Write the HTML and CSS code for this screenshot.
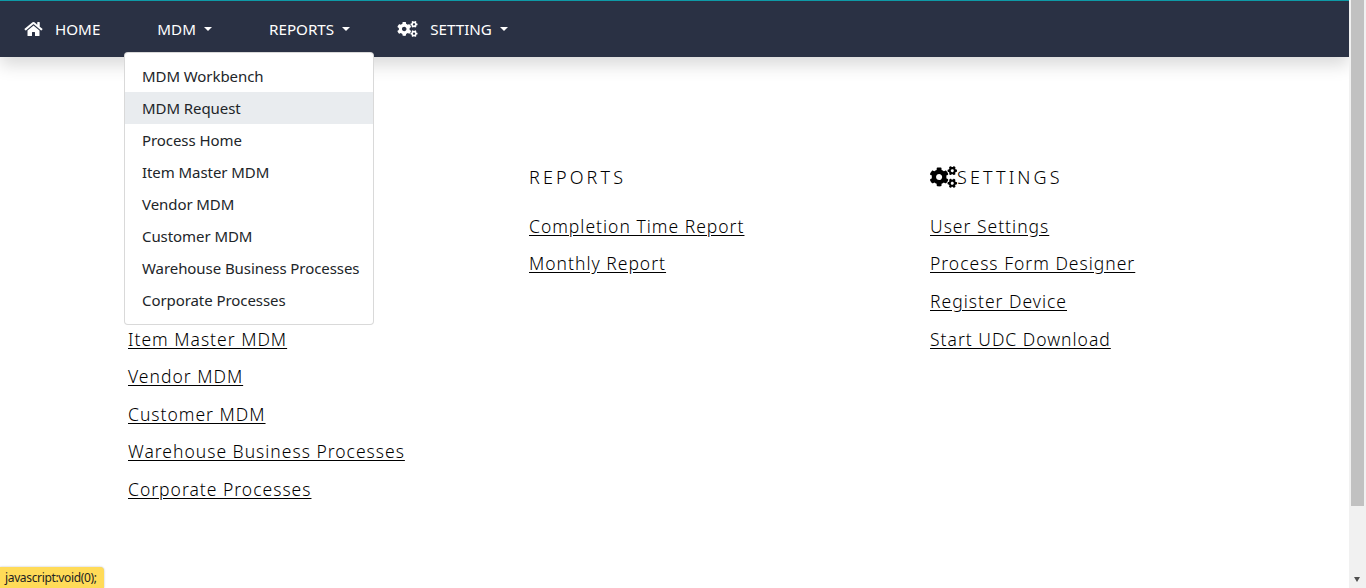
FILE: index.html
```html
<!DOCTYPE html>
<html lang="en">
<head>
<meta charset="utf-8">
<title>MDM</title>
<link rel="stylesheet" href="styles.css">
</head>
<body>
<svg class="defs" width="0" height="0" aria-hidden="true">
<symbol id="cogs" viewBox="0 0 640 512"><path d="M512.1 191l-8.2 14.3c-3 5.3-9.4 7.5-15.1 5.4-11.8-4.4-22.6-10.7-32.1-18.6-4.6-3.8-5.8-10.5-2.8-15.7l8.2-14.3c-6.9-8-12.3-17.3-15.9-27.4h-16.5c-6 0-11.2-4.3-12.2-10.3-2-12-2.1-24.6 0-37.1 1-6 6.2-10.4 12.2-10.4h16.5c3.6-10.1 9-19.4 15.9-27.4l-8.2-14.3c-3-5.2-1.9-11.9 2.8-15.7 9.5-7.9 20.4-14.2 32.1-18.6 5.7-2.1 12.1.1 15.1 5.4l8.2 14.3c10.5-1.9 21.2-1.9 31.7 0L552 6.3c3-5.3 9.4-7.5 15.1-5.4 11.8 4.4 22.6 10.7 32.1 18.6 4.6 3.8 5.8 10.5 2.8 15.7l-8.2 14.3c6.9 8 12.3 17.3 15.9 27.4h16.5c6 0 11.2 4.3 12.2 10.3 2 12 2.1 24.6 0 37.1-1 6-6.2 10.4-12.2 10.4h-16.5c-3.6 10.1-9 19.4-15.9 27.4l8.2 14.3c3 5.2 1.9 11.9-2.8 15.7-9.5 7.9-20.4 14.2-32.1 18.6-5.7 2.1-12.1-.1-15.1-5.4l-8.2-14.3c-10.4 1.9-21.2 1.9-31.7 0zm-10.5-58.8c38.5 29.6 82.4-14.3 52.8-52.8-38.5-29.7-82.4 14.3-52.8 52.8zM386.3 286.1l33.7 16.8c10.1 5.8 14.5 18.1 10.5 29.1-8.9 24.2-26.4 46.4-42.6 65.8-7.4 8.9-20.2 11.1-30.3 5.3l-29.1-16.8c-16 13.7-34.6 24.6-54.9 31.7v33.6c0 11.6-8.3 21.6-19.7 23.6-24.6 4.2-50.4 4.4-75.9 0-11.5-2-20-11.9-20-23.6V418c-20.3-7.2-38.9-18-54.9-31.7L74 403c-10 5.8-22.9 3.6-30.3-5.3-16.2-19.4-33.3-41.6-42.2-65.7-4-10.9.4-23.2 10.5-29.1l33.3-16.8c-3.9-20.9-3.9-42.4 0-63.4L12 205.8c-10.1-5.8-14.6-18.1-10.5-29 8.9-24.2 26-46.4 42.2-65.8 7.4-8.9 20.2-11.1 30.3-5.3l29.1 16.8c16-13.7 34.6-24.6 54.9-31.7V57.1c0-11.5 8.2-21.5 19.6-23.5 24.6-4.2 50.5-4.4 76-.1 11.5 2 20 11.9 20 23.6v33.6c20.3 7.2 38.9 18 54.9 31.7l29.1-16.8c10-5.8 22.9-3.6 30.3 5.3 16.2 19.4 33.2 41.6 42.1 65.8 4 10.9.1 23.2-10 29.1l-33.7 16.8c3.9 21 3.9 42.5 0 63.5zm-117.6 21.1c59.2-77-28.7-164.9-105.7-105.7-59.2 77 28.7 164.9 105.7 105.7zm243.4 182.7l-8.2 14.3c-3 5.3-9.4 7.5-15.1 5.4-11.8-4.4-22.6-10.7-32.1-18.6-4.6-3.8-5.8-10.5-2.8-15.7l8.2-14.3c-6.9-8-12.3-17.3-15.9-27.4h-16.5c-6 0-11.2-4.3-12.2-10.3-2-12-2.1-24.6 0-37.1 1-6 6.2-10.4 12.2-10.4h16.5c3.6-10.1 9-19.4 15.9-27.4l-8.2-14.3c-3-5.2-1.9-11.9 2.8-15.7 9.5-7.9 20.4-14.2 32.1-18.6 5.7-2.1 12.1.1 15.1 5.4l8.2 14.3c10.5-1.9 21.2-1.9 31.7 0l8.2-14.3c3-5.3 9.4-7.5 15.1-5.4 11.8 4.4 22.6 10.7 32.1 18.6 4.6 3.8 5.8 10.5 2.8 15.7l-8.2 14.3c6.9 8 12.3 17.3 15.9 27.4h16.5c6 0 11.2 4.3 12.2 10.3 2 12 2.1 24.6 0 37.1-1 6-6.2 10.4-12.2 10.4h-16.5c-3.6 10.1-9 19.4-15.9 27.4l8.2 14.3c3 5.2 1.9 11.9-2.8 15.7-9.5 7.9-20.4 14.2-32.1 18.6-5.7 2.1-12.1-.1-15.1-5.4l-8.2-14.3c-10.4 1.9-21.2 1.9-31.7 0zM501.6 431c38.5 29.6 82.4-14.3 52.8-52.8-38.5-29.6-82.4 14.3-52.8 52.8z"/></symbol>
<symbol id="home" viewBox="0 0 576 512"><path d="M280.37 148.26L96 300.11V464a16 16 0 0 0 16 16l112.06-.29a16 16 0 0 0 15.92-16V368a16 16 0 0 1 16-16h64a16 16 0 0 1 16 16v95.64a16 16 0 0 0 16 16.05L464 480a16 16 0 0 0 16-16V300L295.67 148.26a12.19 12.19 0 0 0-15.3 0zM571.6 251.47L488 182.56V44.05a12 12 0 0 0-12-12h-56a12 12 0 0 0-12 12v72.61L318.47 43a48 48 0 0 0-61 0L4.34 251.47a12 12 0 0 0-1.6 16.9l25.5 31A12 12 0 0 0 45.15 301l235.22-193.74a12.19 12.19 0 0 1 15.3 0L530.9 301a12 12 0 0 0 16.9-1.6l25.5-31a12 12 0 0 0-1.7-16.93z"/></symbol>
</svg>
<div class="page">
  <nav class="navbar">
    <a class="nav-item nav-home" href="#"><svg class="nav-icon icon-home"><use href="#home"/></svg>HOME</a>
    <a class="nav-item nav-mdm caret" href="#">MDM</a>
    <a class="nav-item nav-reports caret" href="#">REPORTS</a>
    <a class="nav-item nav-setting caret" href="#"><svg class="nav-icon icon-cogs"><use href="#cogs"/></svg>SETTING</a>
  </nav>
  <div class="dropdown">
    <a href="#">MDM Workbench</a>
    <a class="active" href="#">MDM Request</a>
    <a href="#">Process Home</a>
    <a href="#">Item Master MDM</a>
    <a href="#">Vendor MDM</a>
    <a href="#">Customer MDM</a>
    <a href="#">Warehouse Business Processes</a>
    <a href="#">Corporate Processes</a>
  </div>
  <main class="columns">
    <section class="col">
      <h2 class="covered">MDM</h2>
      <a class="covered" href="#">MDM Workbench</a>
      <a class="covered" href="#">MDM Request</a>
      <a class="covered" href="#">Process Home</a>
      <a href="#">Item Master MDM</a>
      <a href="#">Vendor MDM</a>
      <a href="#">Customer MDM</a>
      <a href="#">Warehouse Business Processes</a>
      <a href="#">Corporate Processes</a>
    </section>
    <section class="col">
      <h2>REPORTS</h2>
      <a href="#">Completion Time Report</a>
      <a href="#">Monthly Report</a>
    </section>
    <section class="col">
      <h2><svg class="head-icon"><use href="#cogs"/></svg>SETTINGS</h2>
      <a href="#">User Settings</a>
      <a href="#">Process Form Designer</a>
      <a href="#">Register Device</a>
      <a href="#">Start UDC Download</a>
    </section>
  </main>
</div>
<div class="scrollbar"><div class="thumb"></div><div class="arrow"></div></div>
<div class="status">javascript:void(0);</div>
</body>
</html>
```
FILE: styles.css
```css
* { box-sizing: border-box; }
html, body { margin: 0; height: 588px; overflow: hidden; background: #fff; }
body { font-family: "Noto Sans", "Open Sans", sans-serif; color: #000; position: relative; }
.defs { position: absolute; }
.page { width: 1349px; }
.navbar {
  height: 57px;
  background: #2a3144;
  border-top: 1px solid #0e9aa7;
  box-shadow: 0 8px 16px rgba(0, 0, 0, .15);
  display: flex;
  align-items: center;
  padding-left: 24px;
}
.nav-item {
  color: #fff;
  text-decoration: none;
  font-size: 15.2px;
  display: flex;
  align-items: center;
}
.nav-icon { fill: #fff; height: 16px; margin-right: 12px; }
.icon-home { width: 19px; }
.icon-cogs { width: 21px; }
.nav-mdm { margin-left: 57px; }
.nav-reports { margin-left: 57px; }
.nav-setting { margin-left: 47px; }
.caret::after {
  content: "";
  margin-left: 8px;
  border-top: 4px solid #fff;
  border-left: 4px solid transparent;
  border-right: 4px solid transparent;
}
.dropdown {
  position: absolute;
  left: 124px;
  top: 52px;
  width: 250px;
  height: 273px;
  padding: 7px 0 9px;
  background: #fff;
  border: 1px solid rgba(0, 0, 0, .15);
  border-radius: 4px;
  z-index: 5;
}
.dropdown a {
  display: block;
  height: 32px;
  line-height: 32px;
  padding-left: 17px;
  font-size: 15px;
  letter-spacing: -.07px;
  color: #212529;
  text-decoration: none;
  white-space: nowrap;
}
.dropdown a.active { background: #e9ecef; }
.columns {
  display: grid;
  grid-template-columns: repeat(3, 401px);
  padding: 106px 0 0 128px;
}
.col { display: flex; flex-direction: column; align-items: flex-start; }
.col h2 {
  margin: 0 0 22.9px;
  height: 28px;
  line-height: 28px;
  font-size: 18px;
  font-weight: 300;
  letter-spacing: 3.1px;
  display: flex;
  align-items: center;
}
.head-icon { width: 27px; height: 22px; fill: #000; }
.col a {
  height: 37.6px;
  line-height: 24px;
  font-size: 17.5px;
  font-weight: 300;
  letter-spacing: 1px;
  color: #000;
  text-decoration: underline;
  text-underline-offset: 2px;
}
.col .covered { visibility: hidden; }
.scrollbar {
  position: absolute;
  left: 1349px;
  top: 0;
  width: 17px;
  height: 588px;
  background: #f1f1f1;
}
.thumb {
  margin-left: 2px;
  width: 13px;
  height: 506px;
  background: #c1c1c1;
}
.arrow {
  position: absolute;
  left: 5px;
  top: 577px;
  border-top: 5px solid #505050;
  border-left: 3.5px solid transparent;
  border-right: 3.5px solid transparent;
}
.status {
  position: absolute;
  left: 0;
  bottom: 0;
  height: 21px;
  width: 104px;
  padding-left: 5px;
  line-height: 22px;
  font-size: 12px;
  letter-spacing: -.35px;
  white-space: nowrap;
  background: #ffdb58;
  border-top-right-radius: 4px;
  box-shadow: 0 0 2px rgba(0, 0, 0, .3);
  color: #222;
}
```
